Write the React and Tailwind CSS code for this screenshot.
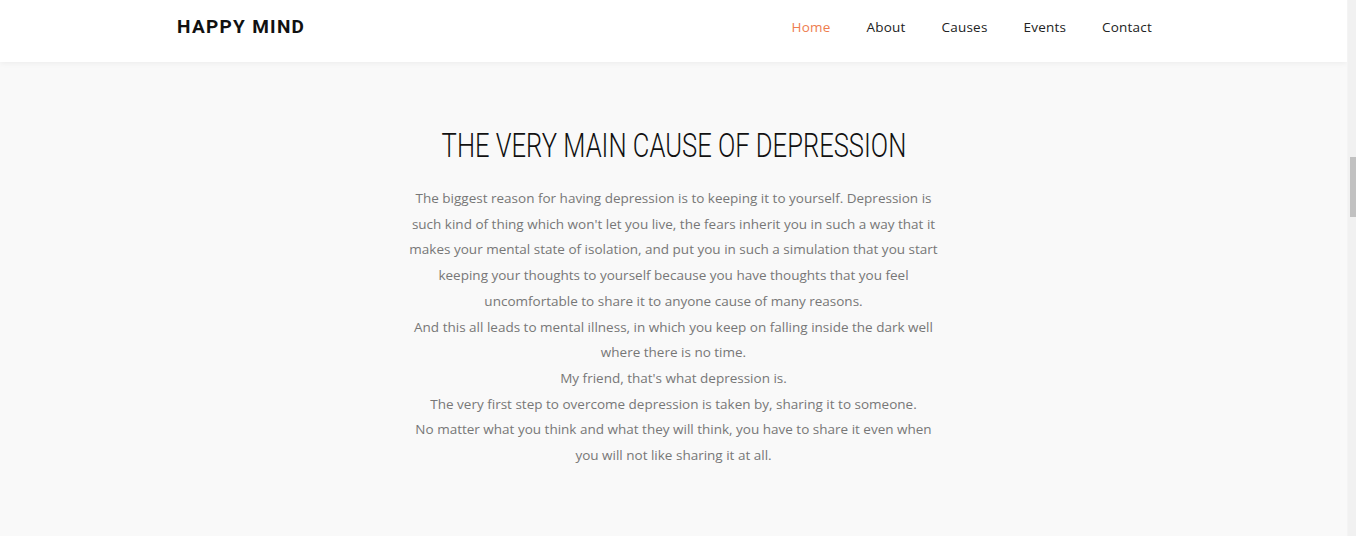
const NAV = ['Home', 'About', 'Causes', 'Events', 'Contact']

const LINES = [
  ['The biggest reason for having depression is to keeping it to yourself. Depression is',
    "such kind of thing which won't let you live, the fears inherit you in such a way that it",
    'makes your mental state of isolation, and put you in such a simulation that you start',
    'keeping your thoughts to yourself because you have thoughts that you feel',
    'uncomfortable to share it to anyone cause of many reasons.'],
  ['And this all leads to mental illness, in which you keep on falling inside the dark well',
    'where there is no time.'],
  ["My friend, that's what depression is."],
  ['The very first step to overcome depression is taken by, sharing it to someone.'],
  ['No matter what you think and what they will think, you have to share it even when',
    'you will not like sharing it at all.'],
]

export default function App() {
  return (
    <div className="flex h-[536px] w-full overflow-hidden bg-[#f9f9f9]">
      <div className="flex-1">
        <header className="h-[62px] bg-white shadow-[0_1px_6px_rgba(0,0,0,0.06)]">
          <div className="mx-auto flex h-full w-[993px] items-center justify-between pb-2">
            <div className="font-['Roboto',sans-serif] text-[19px] font-bold tracking-[1.3px] text-[#111]">
              HAPPY MIND
            </div>
            <nav className="flex">
              {NAV.map((item, i) => (
                <a key={item}
                  className={`px-[18px] font-['Open_Sans',sans-serif] text-[13.5px] tracking-[0.2px] ${i === 0 ? 'text-[#ee7d4e]' : 'text-[#222]'}`}>
                  {item}
                </a>
              ))}
            </nav>
          </div>
        </header>

        <section className="pt-[64px] text-center">
          <h1 className="font-['Roboto',sans-serif] text-[34px] font-light leading-[38px] text-[#111]">
            <span className="inline-block scale-x-[0.752]">THE VERY MAIN CAUSE OF DEPRESSION</span>
          </h1>
          <div className="mt-[22px] font-['Open_Sans',sans-serif] text-[13.5px] leading-[25.7px] text-[#777]">
            {LINES.map((p, i) => (
              <p key={i}>
                {p.map((l, j) => (
                  <span key={j} className="block">{l}</span>
                ))}
              </p>
            ))}
          </div>
        </section>
      </div>
      <div className="flex w-[9px] flex-col border-l border-[#f4f4f4] bg-[#f1f1f1]">
        <div className="ml-[2px] mt-[157px] h-[60px] bg-[#c1c1c1]" />
      </div>
    </div>
  )
}
